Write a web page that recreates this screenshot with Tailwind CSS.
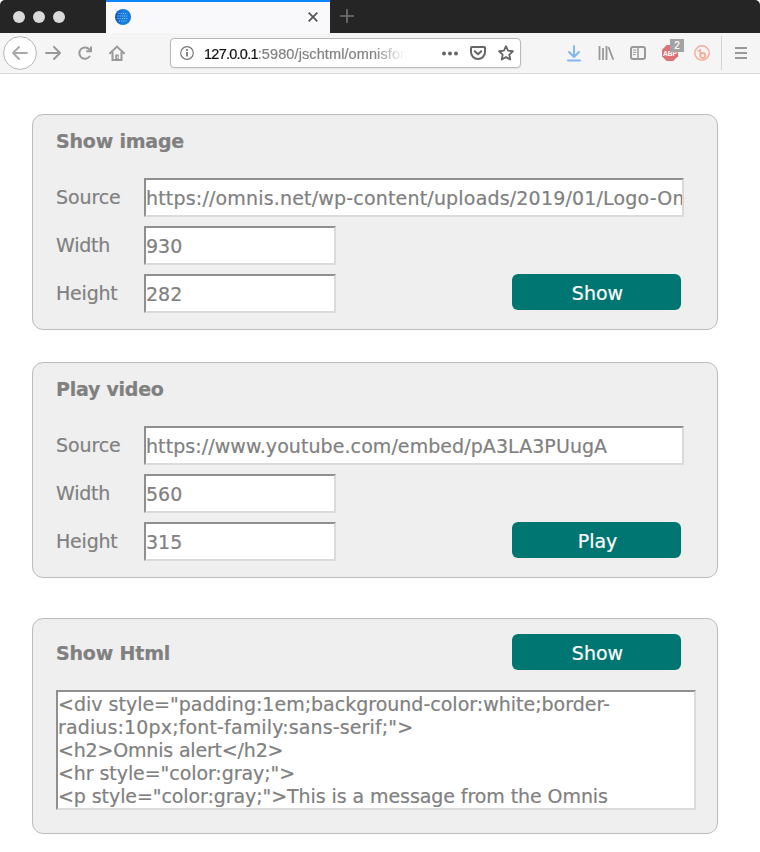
<!DOCTYPE html>
<html lang="en">
<head>
<meta charset="utf-8">
<title>Omnis forms</title>
<script src="https://cdn.jsdelivr.net/npm/@tailwindcss/browser@4"></script>
</head>
<body class="w-[760px] h-[852px] overflow-hidden bg-white text-[19px] leading-[23px] text-[#808080] font-['DejaVu_Sans',sans-serif] whitespace-nowrap [-webkit-text-stroke:0.2px_currentColor]">
<header class="rounded-t-[5px] overflow-hidden">
  <div class="flex h-[33px] bg-[#252525]">
    <div class="flex w-[106px] items-center gap-2 pl-[13px]">
      <span class="size-3 rounded-full bg-[#d9d9d9]"></span>
      <span class="size-3 rounded-full bg-[#d9d9d9]"></span>
      <span class="size-3 rounded-full bg-[#d9d9d9]"></span>
    </div>
    <div class="flex w-[224px] items-center justify-between border-t-2 border-[#0a84ff] bg-[#f9f9fb] pl-[9px] pr-3 pb-px">
      <svg class="size-4" viewBox="0 0 16 16"><defs><linearGradient id="globe"><stop stop-color="#1552bd"/><stop offset=".5" stop-color="#1682df"/><stop offset="1" stop-color="#1672d8"/></linearGradient></defs><circle cx="8" cy="8" r="8" fill="url(#globe)"/><path d="M3.5 4.5h9M2.5 7h11M2.5 9.5h11M4 12h8" stroke="#8fd0ff" stroke-width="1" stroke-dasharray="1 1.2"/></svg>
      <svg class="size-[10px]" viewBox="0 0 10 10"><path d="M.7.7l8.600 8.600M9.300.7L.7 9.300" stroke="#555" stroke-width="1.7"/></svg>
    </div>
    <div class="flex items-center pl-[10px] pb-px">
      <svg class="size-[14px]" viewBox="0 0 14 14"><path d="M7 0v14M0 7h14" stroke="#747474" stroke-width="1.6"/></svg>
    </div>
  </div>
  <div class="flex h-[41px] items-center border-b border-[#dcdcdc] bg-[#f5f5f5]">
    <svg class="ml-[3px] h-[34px] w-[34px]" viewBox="0 0 34 34" fill="none"><circle cx="17" cy="17" r="16.4" fill="#fff" stroke="#b5b5b5"/><path d="M24 17H10M16 11l-6 6 6 6" stroke="#aaa" stroke-width="2" stroke-linecap="round" stroke-linejoin="round"/></svg>
    <svg class="ml-2 size-4" viewBox="0 0 16 16" fill="none"><path d="M1 8h14M9 2l6 6-6 6" stroke="#999" stroke-width="2" stroke-linecap="round" stroke-linejoin="round"/></svg>
    <svg class="ml-4 size-4" viewBox="0 0 16 16" fill="none"><path d="M12.300 4.300A5.700 5.700 0 1 0 12.600 11.500" stroke="#999" stroke-width="2" stroke-linecap="round"/><path d="M14 1.500v4.700H9.300" stroke="#999" stroke-width="2"/></svg>
    <svg class="ml-4 size-4" viewBox="0 0 16 16"><path d="M8 1.600L1 8.300M8 1.600l7 6.700" stroke="#999" stroke-width="2" stroke-linecap="round"/><path d="M3.500 7v8h9V7" stroke="#999" stroke-width="2" fill="none"/><path d="M6.300 15V9.500h3.400V15z" fill="#999"/><circle cx="8.600" cy="12.300" r=".7" fill="#fff"/></svg>
    <div class="ml-[45px] flex h-[30px] w-[351px] items-center rounded-[4px] border border-[#b8b8b8] bg-white pl-[9px] shadow-[0_1px_2px_#0001]">
      <svg class="size-[14px] shrink-0" viewBox="0 0 14 14" fill="none"><circle cx="7" cy="7" r="6.300" stroke="#777" stroke-width="1.200"/><path d="M7 6v4.500" stroke="#666" stroke-width="1.600"/><circle cx="7" cy="3.900" r="1" fill="#666"/></svg>
      <div class="ml-[10px] w-[201px] overflow-hidden pt-[2px] text-[14.500px] leading-5 tracking-[0.1px] font-['Liberation_Sans',sans-serif] text-[#808080] mask-r-from-[170px] mask-r-to-[201px]"><span class="tracking-[-0.75px] text-[#111]">127.0.0.1</span>:5980/jschtml/omnisfor</div>
      <svg class="ml-[37px] h-[5px] w-4 shrink-0" viewBox="0 0 16 5" fill="#666"><circle cx="2" cy="2.500" r="2"/><circle cx="8" cy="2.500" r="2"/><circle cx="14" cy="2.500" r="2"/></svg>
      <svg class="ml-3 size-4 shrink-0" viewBox="0 0 16 16" fill="none" stroke="#666" stroke-width="2" stroke-linecap="round" stroke-linejoin="round"><path d="M1.800 2h12.400q.8 0 .8.800V7a7 7 0 0 1-14 0V2.800Q1 2 1.800 2z"/><path d="M4.800 6.200L8 9.300l3.200-3.100"/></svg>
      <svg class="ml-3 size-4 shrink-0" viewBox="0 0 16 16" fill="none" stroke="#666" stroke-width="1.800" stroke-linejoin="round"><path d="M8 1.200l2.050 4.450 4.850.6-3.600 3.350.95 4.900L8 12.100l-4.250 2.400.95-4.900L1.100 6.250l4.850-.6z"/></svg>
    </div>
    <svg class="ml-[46px] h-[18px] w-[14px]" viewBox="0 0 14 18" fill="none" stroke="#82b8ef" stroke-width="2" stroke-linecap="round" stroke-linejoin="round"><path d="M7 2v10.500M2 8l5 5 5-5M1 16.500h12"/></svg>
    <svg class="ml-[17px] size-4" viewBox="0 0 16 16" stroke="#999" stroke-width="1.800"><path d="M1.500 1v14M5 3v12M8.500 1v14"/><path d="M10.500 2l4.700 12.700"/></svg>
    <svg class="ml-4 h-[14px] w-4" viewBox="0 0 16 14" fill="none" stroke="#999"><rect x="1" y="1" width="14" height="12" rx="2" stroke-width="2"/><path d="M8 1v12" stroke-width="1.500"/><path d="M3 4h3.300M3 6.300h3.300M3 8.600h2.500" stroke-width="1"/></svg>
    <div class="relative ml-4 size-4">
      <svg class="size-4" viewBox="0 0 16 16"><path d="M4.700 0h6.600L16 4.700v6.600L11.300 16H4.700L0 11.300V4.700z" fill="#dc7377"/><text x="8" y="10.700" font-size="7" font-weight="bold" font-family="Liberation Sans" fill="#fff" text-anchor="middle" textLength="14" lengthAdjust="spacingAndGlyphs">ABP</text></svg>
      <span class="absolute -top-[6px] left-2 flex h-[13px] w-[14px] items-center justify-center bg-[#a3a3a3] font-['Liberation_Sans',sans-serif] text-[10px] leading-none text-white">2</span>
    </div>
    <svg class="ml-4 size-4" viewBox="0 0 16 16" fill="none" stroke="#f4ae9b" stroke-width="1.500"><circle cx="8" cy="8" r="7.200"/><path d="M4 5.800q2.300.2 2.300-1.800V11" stroke-linecap="round"/><circle cx="8.800" cy="10.500" r="2.500" stroke-width="1.800"/></svg>
    <span class="ml-[11px] h-[34px] w-px bg-[#d4d4d4]"></span>
    <svg class="ml-[13px] h-3 w-3" viewBox="0 0 12 12" stroke="#999" stroke-width="2"><path d="M0 1h12M0 6h12M0 11h12"/></svg>
  </div>
</header>

<main class="pl-8 pt-10">
  <section class="h-[216px] w-[686px] rounded-[11px] border border-[#bcbcbc] bg-[#efefef] pl-[23px]">
    <h2 class="pt-[15px] font-bold tracking-[-0.2px]">Show image</h2>
    <div class="mt-[25px] grid grid-cols-[88px_368px_172px] gap-y-[9px]">
      <label class="pt-2 tracking-[-0.1px]">Source</label>
      <div class="col-span-2 h-[39px] w-[540px] overflow-hidden border-2 border-t-[#8f8f8f] border-l-[#8f8f8f] border-r-[#dadada] border-b-[#dadada] bg-white pt-[7px] tracking-[0.18px]">https://omnis.net/wp-content/uploads/2019/01/Logo-Om</div>
      <label class="pt-2 tracking-[-0.2px]">Width</label>
      <div class="col-span-2 h-[39px] w-[192px] border-2 border-t-[#8f8f8f] border-l-[#8f8f8f] border-r-[#dadada] border-b-[#dadada] bg-white pt-[7px]">930</div>
      <label class="pt-2 tracking-[-0.2px]">Height</label>
      <div class="h-[39px] w-[192px] border-2 border-t-[#8f8f8f] border-l-[#8f8f8f] border-r-[#dadada] border-b-[#dadada] bg-white pt-[7px]">282</div>
      <button class="h-9 w-[169px] rounded-[6px] bg-[#007672] pt-[3px] pl-[2px] text-white">Show</button>
    </div>
  </section>

  <section class="mt-8 h-[216px] w-[686px] rounded-[11px] border border-[#bcbcbc] bg-[#efefef] pl-[23px]">
    <h2 class="pt-[15px] font-bold tracking-[-0.25px]">Play video</h2>
    <div class="mt-[25px] grid grid-cols-[88px_368px_172px] gap-y-[9px]">
      <label class="pt-2 tracking-[-0.1px]">Source</label>
      <div class="col-span-2 h-[39px] w-[540px] overflow-hidden border-2 border-t-[#8f8f8f] border-l-[#8f8f8f] border-r-[#dadada] border-b-[#dadada] bg-white pt-[7px] tracking-[0.07px]">https://www.youtube.com/embed/pA3LA3PUugA</div>
      <label class="pt-2 tracking-[-0.2px]">Width</label>
      <div class="col-span-2 h-[39px] w-[192px] border-2 border-t-[#8f8f8f] border-l-[#8f8f8f] border-r-[#dadada] border-b-[#dadada] bg-white pt-[7px]">560</div>
      <label class="pt-2 tracking-[-0.2px]">Height</label>
      <div class="h-[39px] w-[192px] border-2 border-t-[#8f8f8f] border-l-[#8f8f8f] border-r-[#dadada] border-b-[#dadada] bg-white pt-[7px]">315</div>
      <button class="h-9 w-[169px] rounded-[6px] bg-[#007672] pt-[3px] pl-[2px] text-white">Play</button>
    </div>
  </section>

  <section class="mt-10 h-[216px] w-[686px] rounded-[11px] border border-[#bcbcbc] bg-[#efefef] pl-[23px] pt-[15px]">
    <div class="flex h-9 w-[625px] items-center justify-between">
      <h2 class="pt-[2px] font-bold tracking-[-0.17px]">Show Html</h2>
      <button class="h-9 w-[169px] rounded-[6px] bg-[#007672] pt-[3px] pl-[2px] text-white">Show</button>
    </div>
    <div class="mt-5 h-[120px] w-[640px] overflow-hidden border-2 border-t-[#8f8f8f] border-l-[#8f8f8f] border-r-[#dadada] border-b-[#dadada] bg-white pt-px">
      <p>&lt;div style="padding:1em;background-color:white;border-</p>
      <p class="tracking-[0.14px]">radius:10px;font-family:sans-serif;"&gt;</p>
      <p class="tracking-[-0.18px]">&lt;h2&gt;Omnis alert&lt;/h2&gt;</p>
      <p class="tracking-[-0.07px]">&lt;hr style="color:gray;"&gt;</p>
      <p class="tracking-[-0.08px]">&lt;p style="color:gray;"&gt;This is a message from the Omnis</p>
    </div>
  </section>
</main>
</body>
</html>
